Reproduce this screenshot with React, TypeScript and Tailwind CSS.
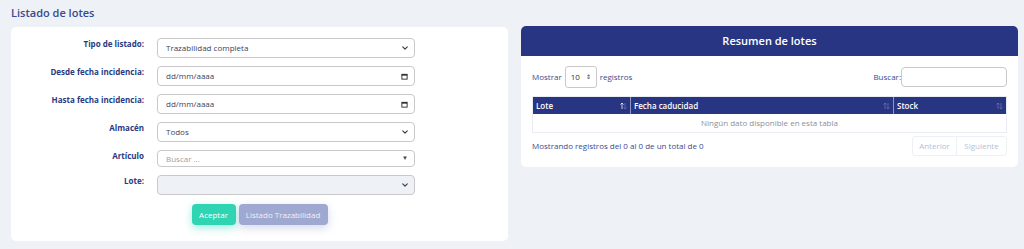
import React from "react";

const font = { fontFamily: "'Open Sans', 'Noto Sans', sans-serif" };

const Chevron = () => (
  <svg width="6" height="6" viewBox="0 0 16 16" className="text-[#343a40]">
    <path d="M2 5l6 6 6-6" fill="none" stroke="currentColor" strokeWidth="3" strokeLinecap="round" strokeLinejoin="round" />
  </svg>
);

const Calendar = () => (
  <svg width="7" height="7" viewBox="0 0 16 16" className="text-[#222]">
    <rect x="2" y="3" width="12" height="11" fill="none" stroke="currentColor" strokeWidth="2" />
    <rect x="2" y="3" width="12" height="3" fill="currentColor" />
  </svg>
);

const SortIcon = ({ active }: { active?: boolean }) => (
  <svg width="7" height="8" viewBox="0 0 14 16">
    <path d="M4 14V2M1 5l3-3 3 3" fill="none" stroke={active ? "#ffffff" : "#6b76ad"} strokeWidth="1.5" />
    <path d="M10 2v12M7 11l3 3 3-3" fill="none" stroke="#6b76ad" strokeWidth="1.5" />
  </svg>
);

const Row = ({ label, children, h = "h-[20px]" }: { label: string; children: React.ReactNode; h?: string }) => (
  <div className="flex items-start">
    <div className="w-[133px] shrink-0 text-right text-[8px] font-bold leading-[12px] text-[#2b3a80]">{label}</div>
    <div className={`ml-[13px] w-[258px] ${h}`}>{children}</div>
  </div>
);

const Field = ({ text, icon, muted, bg = "bg-white" }: { text?: string; icon?: React.ReactNode; muted?: boolean; bg?: string }) => (
  <div className={`flex h-full items-center justify-between rounded-[4px] border border-[#c9c9c9] ${bg} pl-[8px] pr-[6px]`}>
    <span className={`text-[8px] ${muted ? "text-[#a0a0a0]" : "text-[#3c4257]"}`}>{text}</span>
    {icon}
  </div>
);

export default function App() {
  return (
    <div style={font} className="h-[249px] w-[1024px] overflow-hidden bg-[#eef1f6] pl-[11px] pr-[6px] pt-[5px]">
      <h1 className="h-[22px] text-[11px] font-semibold text-[#3a4a8e]">Listado de lotes</h1>
      <div className="flex items-start gap-[13px]">
        <div className="flex w-[497px] shrink-0 flex-col gap-[8px] rounded-[5px] bg-white pb-[16px] pt-[11px]">
          <Row label="Tipo de listado:">
            <Field text="Trazabilidad completa" icon={<Chevron />} />
          </Row>
          <Row label="Desde fecha incidencia:">
            <Field text="dd/mm/aaaa" icon={<Calendar />} />
          </Row>
          <Row label="Hasta fecha incidencia:">
            <Field text="dd/mm/aaaa" icon={<Calendar />} />
          </Row>
          <Row label="Almacén">
            <Field text="Todos" icon={<Chevron />} />
          </Row>
          <Row label="Artículo" h="h-[17px]">
            <Field text="Buscar ..." muted icon={<span className="text-[6px] text-[#444]">▼</span>} />
          </Row>
          <Row label="Lote:">
            <Field bg="bg-[#eef1f6]" icon={<Chevron />} />
          </Row>
          <div className="flex justify-center gap-[3px] pt-[1px]">
            <button className="h-[21px] w-[44px] rounded-[4px] bg-[#2fd5b3] text-[8px] font-medium text-white shadow-[0_3px_8px_rgba(47,213,179,0.45)]">
              Aceptar
            </button>
            <button className="h-[21px] w-[89px] rounded-[4px] bg-[#9fa8d0] text-[8px] font-medium text-[#eef0f8] shadow-[0_3px_8px_rgba(159,168,208,0.45)]">
              Listado Trazabilidad
            </button>
          </div>
        </div>

        <div className="-mt-[1px] w-[497px] shrink-0 overflow-hidden rounded-[5px] bg-white">
          <div className="flex h-[30px] items-center justify-center bg-[#283583] text-[11px] font-semibold text-white">
            Resumen de lotes
          </div>
          <div className="px-[11px] pb-[11px] pt-[10px]">
            <div className="flex items-center justify-between">
              <div className="flex items-center gap-[3px] text-[8px] text-[#3a4a8e]">
                <span>Mostrar</span>
                <div className="flex h-[22px] w-[32px] items-center justify-between rounded-[3px] border border-[#c9c9c9] px-[5px] text-[#333]">
                  <span>10</span>
                  <span className="text-[6px] leading-none">⇕</span>
                </div>
                <span>registros</span>
              </div>
              <div className="flex items-center text-[8px] text-[#3a4a8e]">
                <span>Buscar:</span>
                <div className="h-[20px] w-[106px] rounded-[4px] border border-[#c9c9c9]" />
              </div>
            </div>
            <div className="mt-[8px] border border-[#e9ecf2]">
              <div className="flex h-[17px] bg-[#283583] text-[8px] font-semibold text-white">
                <div className="flex w-[98px] items-center justify-between border-r border-[#8d96c6] px-[3px]">
                  <span>Lote</span>
                  <SortIcon active />
                </div>
                <div className="flex w-[263px] items-center justify-between border-r border-[#8d96c6] px-[3px]">
                  <span>Fecha caducidad</span>
                  <SortIcon />
                </div>
                <div className="flex flex-1 items-center justify-between px-[3px]">
                  <span>Stock</span>
                  <SortIcon />
                </div>
              </div>
              <div className="flex h-[18px] items-center justify-center text-[8px] text-[#8a8f9c]">
                Ningún dato disponible en esta tabla
              </div>
            </div>
            <div className="mt-[3px] flex items-center justify-between">
              <span className="text-[8px] text-[#3a4a8e]">Mostrando registros del 0 al 0 de un total de 0</span>
              <div className="flex h-[20px] rounded-[3px] border border-[#eef0f4] text-[8px] text-[#b9bed6]">
                <div className="flex w-[44px] items-center justify-center border-r border-[#eef0f4]">Anterior</div>
                <div className="flex w-[49px] items-center justify-center">Siguiente</div>
              </div>
            </div>
          </div>
        </div>
      </div>
    </div>
  );
}
